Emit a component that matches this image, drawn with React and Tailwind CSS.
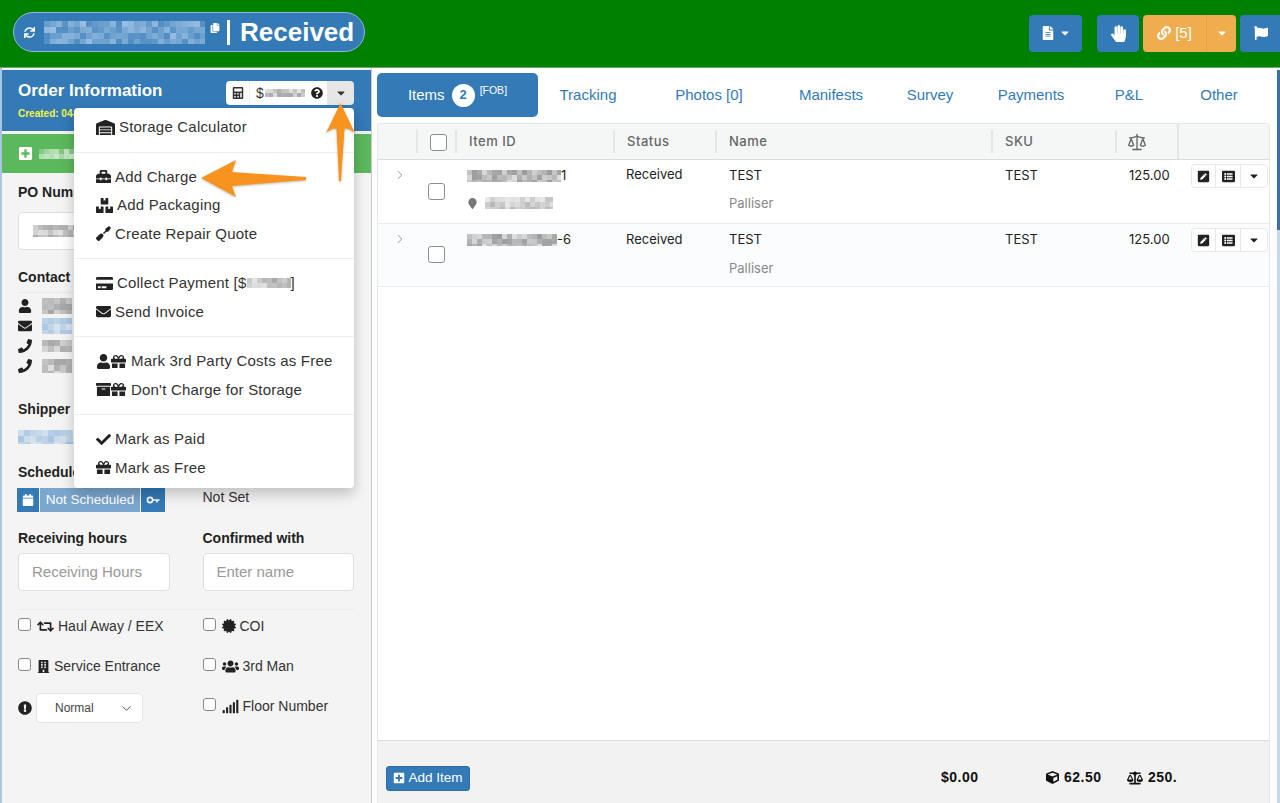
import React from "react";
import {
  FaSync, FaCopy, FaFileAlt, FaHandPaper, FaLink, FaCaretDown, FaCalculator, FaQuestionCircle,
  FaWarehouse, FaToolbox, FaBoxes, FaScrewdriver, FaCreditCard, FaEnvelope, FaUser, FaGift,
  FaArchive, FaCheck, FaPhoneAlt, FaPlusSquare, FaCalendar, FaRetweet, FaCertificate,
  FaBuilding, FaUsers, FaSignal, FaExclamationCircle, FaMapMarker, FaPenSquare, FaListAlt, FaCube,
  FaBalanceScale, FaFlag,
} from "react-icons/fa";
import { ChevronRight, ChevronDown, Scale } from "lucide-react";

const sans = "font-['Liberation_Sans',Arial,sans-serif]";

// pixelated block standing in for the censored bits of the screenshot
const Mosaic = ({ w, h, color = "#777", seed = 3, cell = 6 }) => {
  const cols = Math.ceil(w / cell);
  const rows = Math.ceil(h / cell);
  const cells = [];
  for (let i = 0; i < cols * rows; i++) {
    const v = Math.abs(Math.sin((i + 1) * 12.9898 * seed) * 43758.5453) % 1;
    cells.push(0.25 + v * 0.6);
  }
  return (
    <span
      className="inline-grid overflow-hidden blur-[0.7px] shrink-0"
      style={{ width: w, height: h, gridTemplateColumns: `repeat(${cols}, ${cell}px)`, gridAutoRows: `${cell}px` }}
    >
      {cells.map((o, i) => (
        <span key={i} style={{ background: color, opacity: o }} />
      ))}
    </span>
  );
};

const MenuItem = ({ icon, children }) => (
  <div className="h-[28.5px] pl-[22px] flex items-center gap-[4px] text-[15px] text-[#333] tracking-[0.2px] whitespace-nowrap">
    <span className="flex items-center text-[#222]">{icon}</span>
    {children}
  </div>
);

const MenuDivider = () => <div className="my-[10px] h-px bg-[#eeeeee]" />;

const Dropdown = () => (
  <div className="absolute left-[72px] top-[40px] w-[280px] bg-white rounded-[4px] pt-[5px] pb-[6px] shadow-[0_6px_14px_rgba(0,0,0,0.22)] z-10">
    <MenuItem icon={<FaWarehouse className="text-[19px]" />}>Storage Calculator</MenuItem>
    <MenuDivider />
    <MenuItem icon={<FaToolbox className="text-[15px]" />}>Add Charge</MenuItem>
    <MenuItem icon={<FaBoxes className="text-[17px]" />}>Add Packaging</MenuItem>
    <MenuItem icon={<FaScrewdriver className="text-[15px]" />}>Create Repair Quote</MenuItem>
    <MenuDivider />
    <MenuItem icon={<FaCreditCard className="text-[17px]" />}>
      <span className="flex items-center">Collect Payment [$<Mosaic w={44} h={10} color="#999" seed={5} cell={5} />]</span>
    </MenuItem>
    <MenuItem icon={<FaEnvelope className="text-[15px]" />}>Send Invoice</MenuItem>
    <MenuDivider />
    <MenuItem icon={<span className="flex mr-px"><FaUser className="text-[15px]" /><FaGift className="text-[15px]" /></span>}>
      Mark 3rd Party Costs as Free
    </MenuItem>
    <MenuItem icon={<span className="flex mr-px"><FaArchive className="text-[15px]" /><FaGift className="text-[15px]" /></span>}>
      Don't Charge for Storage
    </MenuItem>
    <MenuDivider />
    <MenuItem icon={<FaCheck className="text-[15px]" />}>Mark as Paid</MenuItem>
    <MenuItem icon={<FaGift className="text-[15px]" />}>Mark as Free</MenuItem>
  </div>
);

const Label = ({ children, className = "" }) => (
  <div className={`text-[14px] font-bold text-[#222] leading-5 ${className}`}>{children}</div>
);

const TextBox = ({ placeholder }) => (
  <div className="h-[38px] bg-white border border-[#ddd] rounded-[4px] px-[13px] flex items-center text-[15px] text-[#999]">
    {placeholder}
  </div>
);

const Check = ({ icon, label }) => (
  <div className="h-[40px] flex items-start gap-[5px] text-[14px] text-[#333] whitespace-nowrap">
    <span className="w-[13px] h-[13px] mt-[1px] bg-white border border-[#888] rounded-[3px] shrink-0" />
    <span className="flex items-center gap-[4px] leading-[18px] ml-px">
      {icon}
      {label}
    </span>
  </div>
);

const ContactRow = ({ icon, children }) => (
  <div className="h-[20px] flex items-center text-[#222]">
    <span className="w-[24px] text-[14px] flex">{icon}</span>
    {children}
  </div>
);

const Phone = () => <FaPhoneAlt className="-scale-x-100" />;

const KeyIcon = () => (
  <svg width="14" height="8" viewBox="0 0 14 8" fill="none" stroke="currentColor" strokeWidth="1.6">
    <circle cx="4" cy="4" r="2.6" />
    <path d="M6.6 4H13.5M11 4V6.5" />
  </svg>
);

const OrderPanel = () => (
  <aside className={`relative w-[372px] shrink-0 bg-[#f4f4f4] border-l-2 border-l-[#a9c6e3] border-r border-r-[#c9c9c9] pt-[2px] ${sans}`}>
    <div className="h-[61px] bg-[#337ab7] pl-[16px] pr-[17px] pt-[10px] flex justify-between">
      <div>
        <div className="text-[17px] font-bold text-white leading-[22px]">Order Information</div>
        <div className="text-[10px] font-bold text-[#f5f542] mt-[4px] whitespace-nowrap">Created: 04-</div>
      </div>
      <div className="flex h-[24px] mt-px text-[14px] text-[#333] rounded-[4px] overflow-hidden">
        <span className="w-[24px] bg-white flex items-center justify-center border-r border-[#eee]"><FaCalculator className="text-[12px]" /></span>
        <span className="w-[77px] bg-white flex items-center pl-[6px] gap-px">
          $<Mosaic w={40} h={8} color="#999" seed={7} cell={4} />
          <FaQuestionCircle className="text-[12px] text-[#222] ml-[5px]" />
        </span>
        <span className="w-[27px] bg-[#e6e6e6] flex items-center justify-center"><FaCaretDown className="text-[12px]" /></span>
      </div>
    </div>
    <div className="mt-[3px] h-[39px] bg-[#5cb85c] pl-[16px] flex items-center gap-[6px]">
      <FaPlusSquare className="text-[15px] text-white" />
      <Mosaic w={40} h={10} color="#e5f3e5" seed={2} cell={5} />
    </div>

    <div className="pl-[16px] pr-[17px]">
      <Label className="mt-[9px]">PO Number</Label>
      <div className="mt-[10px] h-[38px] bg-white border border-[#ddd] rounded-[4px] px-[14px] flex items-center">
        <Mosaic w={50} h={12} color="#999" seed={4} cell={5} />
      </div>
      <Label className="mt-[17px] pb-[5px] border-b border-[#e8e8e8]">Contact</Label>
      <div className="mt-[3px]">
        <ContactRow icon={<FaUser />}><Mosaic w={30} h={16} color="#999" seed={3} /></ContactRow>
        <ContactRow icon={<FaEnvelope />}><Mosaic w={30} h={16} color="#9cc0e0" seed={6} /></ContactRow>
        <ContactRow icon={<Phone />}><Mosaic w={30} h={12} color="#999" seed={8} /></ContactRow>
        <ContactRow icon={<Phone />}><Mosaic w={30} h={14} color="#999" seed={9} /></ContactRow>
      </div>
      <Label className="mt-[23px]">Shipper</Label>
      <div className="h-[16px]"><Mosaic w={55} h={14} color="#8db5dc" seed={11} /></div>
      <Label className="mt-[27px]">Schedule</Label>
      <div className="grid grid-cols-2 gap-x-[33px] mt-[6px] h-[24px] items-center">
        <div className="flex h-[24px] -ml-px text-[13.5px] text-white">
          <span className="w-[22px] bg-[#337ab7] flex items-center justify-center"><FaCalendar className="text-[12px]" /></span>
          <span className="w-[100px] ml-px bg-[#7ba6cd] flex items-center justify-center">Not Scheduled</span>
          <span className="w-[24px] ml-px bg-[#337ab7] flex items-center justify-center"><KeyIcon /></span>
        </div>
        <div className="text-[14px] text-[#333] -mt-[5px]">Not Set</div>
      </div>

      <div className="grid grid-cols-2 gap-x-[33px] mt-[16px]">
        <div>
          <Label>Receiving hours</Label>
          <div className="mt-[5px]"><TextBox placeholder="Receiving Hours" /></div>
        </div>
        <div>
          <Label>Confirmed with</Label>
          <div className="mt-[5px]"><TextBox placeholder="Enter name" /></div>
        </div>
      </div>
      <div className="mt-[18px] mb-[7px] h-px bg-[#ebebeb]" />
      <div className="grid grid-cols-2 gap-x-[33px]">
        <div>
          <Check icon={<FaRetweet className="text-[17px] text-[#222]" />} label="Haul Away / EEX" />
          <Check icon={<FaBuilding className="text-[13px] text-[#222]" />} label="Service Entrance" />
          <div className="flex items-center gap-[4px] -mt-[4px]">
            <FaExclamationCircle className="text-[14px] text-[#222]" />
            <div className="w-[107px] h-[30px] bg-white border border-[#e5e5e5] rounded-[4px] pl-[18px] pr-[8px] flex items-center justify-between text-[12px] text-[#444]">
              Normal
              <ChevronDown size={15} strokeWidth={1.4} />
            </div>
          </div>
        </div>
        <div>
          <Check icon={<FaCertificate className="text-[14px] text-[#222]" />} label="COI" />
          <Check icon={<FaUsers className="text-[17px] text-[#222]" />} label="3rd Man" />
          <Check icon={<FaSignal className="text-[17px] text-[#222]" />} label="Floor Number" />
        </div>
      </div>
    </div>

    <Dropdown />
  </aside>
);

const Tab = ({ w, children }) => (
  <div className={`${w} h-[44px] flex items-center justify-center text-[15px] text-[#337ab7]`}>{children}</div>
);

const HeadCell = ({ children, className = "" }) => (
  <div className={`h-[23px] border-l-2 border-[#e3e6e6] pl-[12px] pt-px flex items-center ${className}`}>{children}</div>
);

const ActionGroup = () => (
  <div className="absolute left-[813px] top-[4px] w-[77px] h-[24px] flex bg-white border border-[#e8e8e8] rounded-[4px] text-[#222]">
    <span className="w-[24px] border-r border-[#e8e8e8] flex items-center justify-center"><FaPenSquare className="text-[13px]" /></span>
    <span className="w-[25px] border-r border-[#e8e8e8] flex items-center justify-center"><FaListAlt className="text-[13px]" /></span>
    <span className="flex-1 flex items-center justify-center"><FaCaretDown className="text-[12px]" /></span>
  </div>
);

const ItemRow = ({ id, location, seed, shade }) => (
  <div className={`relative grid grid-cols-[38px_39px_158px_102px_276px_124px_62px_1fr] border-b border-[#e9ecef] text-[13px] text-[#222] font-['Inter',sans-serif] ${shade ? "h-[63px] bg-[#fbfcfe]" : "h-[64px] bg-white"}`}>
    <div className="pl-[15px] pt-[8px] text-[#777]"><ChevronRight size={14} strokeWidth={1.3} /></div>
    <div className={`pl-[12px] ${shade ? "pt-[22px]" : "pt-[23px]"}`}><span className="block w-[17px] h-[17px] bg-white border border-[#8a9090] rounded-[3px]" /></div>
    <div className="pl-[12px] pt-[7px]">
      <div className="flex items-center h-[18px]">
        <Mosaic w={id === "1" ? 94 : 90} h={12} color="#8a8a8a" seed={seed} cell={5} />
        <span>{id === "1" ? "1" : "-6"}</span>
      </div>
      {location && (
        <div className="flex items-center gap-[7px] mt-[12px] text-[#777]">
          <FaMapMarker className="text-[11px]" />
          <Mosaic w={68} h={12} color="#aaa" seed={13} cell={5} />
        </div>
      )}
    </div>
    <div className={`pl-[13px] ${shade ? "pt-[6px]" : "pt-[5px]"}`}>Received</div>
    <div className="pl-[14px] pt-[6px]">
      <div>TEST</div>
      <div className={`text-[#888] ${shade ? "mt-[9px]" : "mt-[8px]"}`}>Palliser</div>
    </div>
    <div className="pl-[14px] pt-[6px]">TEST</div>
    <div className="pl-[14px] pt-[6px] whitespace-nowrap">125.00</div>
    <div />
    <ActionGroup />
  </div>
);

const ItemsPanel = () => (
  <main className={`relative flex-1 bg-white pl-[5px] pr-[10px] pt-[5px] flex flex-col ${sans}`}>
    <div className="flex h-[44px]">
      <div className="w-[161px] bg-[#337ab7] rounded-[5px] flex items-center justify-center text-[15px] text-white">
        <span>Items</span>
        <span className="ml-[7px] w-[23px] h-[23px] rounded-full bg-white text-[#337ab7] text-[13px] font-bold flex items-center justify-center">2</span>
        <span className="ml-[5px] text-[10.5px] -mt-[8px]">[FOB]</span>
      </div>
      <Tab w="w-[100px]">Tracking</Tab>
      <Tab w="w-[142px]">Photos [0]</Tab>
      <Tab w="w-[102px]">Manifests</Tab>
      <Tab w="w-[96px]">Survey</Tab>
      <Tab w="w-[106px]">Payments</Tab>
      <Tab w="w-[90px]">P&amp;L</Tab>
      <Tab w="w-[90px]">Other</Tab>
    </div>
    <div className="mt-[6px] flex-1 flex flex-col border border-[#e6e8e8] border-b-0 rounded-t-[3px]">
      <div className="h-[36px] shrink-0 grid grid-cols-[38px_39px_158px_102px_276px_124px_62px_1fr] items-center bg-[#f5f7f7] border-b border-[#d9dcdc] text-[13px] font-medium tracking-[0.5px] text-[#666] font-['Inter',sans-serif]">
        <div />
        <HeadCell className="pl-[12px]"><span className="w-[17px] h-[17px] bg-white border border-[#8a9090] rounded-[3px]" /></HeadCell>
        <HeadCell>Item ID</HeadCell>
        <HeadCell>Status</HeadCell>
        <HeadCell>Name</HeadCell>
        <HeadCell>SKU</HeadCell>
        <HeadCell><Scale size={20} strokeWidth={1.6} className="-ml-[2px]" /></HeadCell>
        <div className="h-full border-l-2 border-[#e3e6e6]" />
      </div>
      <ItemRow id="1" seed={15} location />
      <ItemRow id="6" seed={17} shade />
      <div className="flex-1" />
      <div className="h-[63px] shrink-0 bg-[#f2f2f2] border-t border-[#dcdcdc] relative flex items-center pl-[8px] pt-[12px]">
        <div className="h-[25px] w-[84px] bg-[#337ab7] border border-[#2e6da4] rounded-[3px] text-white text-[13.5px] flex items-center justify-center gap-[3px]">
          <FaPlusSquare className="text-[12px]" />Add Item
        </div>
        <div className="ml-[471px] w-[105px] text-[14px] tracking-[0.5px] font-bold text-[#111] -mt-[1px]">$0.00</div>
        <div className="w-[81px] flex items-center gap-[5px] text-[14px] tracking-[0.5px] font-bold text-[#111] -mt-[1px]"><FaCube className="text-[13px]" />62.50</div>
        <div className="flex items-center gap-[5px] text-[14px] tracking-[0.5px] font-bold text-[#111] -mt-[1px]"><FaBalanceScale className="text-[16px]" />250.</div>
      </div>
    </div>
    <div className="absolute right-0 top-[2px] w-[3px] h-[160px] bg-[#3b6fa5]" />
    <div className="absolute right-0 top-[162px] w-[3px] bottom-0 bg-[#c6d9ec]" />
  </main>
);

const TopBar = () => (
  <header className={`h-[68px] shrink-0 bg-[#008000] border-b border-[#6fa86f] pl-[13px] flex items-center justify-between ${sans}`}>
    <div className="-mt-[3px] w-[352px] h-[40px] bg-[#337ab7] border border-[#8fb8dc] rounded-[20px] pl-[10px] flex items-center text-white">
      <FaSync className="text-[11px] mr-[9px]" />
      <Mosaic w={161} h={23} color="#a8c8e8" seed={19} />
      <FaCopy className="text-[10px] ml-[5px] -mt-[8px]" />
      <span className="ml-[7px] w-[3px] h-[25px] bg-white" />
      <span className="ml-[10px] text-[26px] font-bold leading-none">Received</span>
    </div>
    <div className="flex items-center -mt-[1px] h-[37px] text-white">
      <div className="w-[53px] h-full bg-[#337ab7] rounded-[4px] flex items-center justify-center gap-[4px]">
        <FaFileAlt className="text-[14px]" /><FaCaretDown className="text-[12px]" />
      </div>
      <div className="ml-[15px] w-[42px] h-full bg-[#337ab7] rounded-[4px] flex items-center justify-center">
        <FaHandPaper className="text-[17px]" />
      </div>
      <div className="ml-[4px] w-[93px] h-full bg-[#f0ad4e] rounded-[4px] flex">
        <span className="w-[64px] border-r border-[#e8a13c] flex items-center justify-center gap-[4px] text-[15px]"><FaLink className="text-[14px]" />[5]</span>
        <span className="flex-1 flex items-center justify-center"><FaCaretDown className="text-[12px]" /></span>
      </div>
      <div className="ml-[4px] w-[40px] h-full bg-[#337ab7] rounded-l-[4px] flex items-center pl-[14px]">
        <FaFlag className="text-[14px]" />
      </div>
    </div>
  </header>
);

const App = () => (
  <div className="relative w-[1280px] h-[803px] overflow-hidden flex flex-col bg-white">
    <TopBar />
    <div className="flex-1 flex min-h-0">
      <OrderPanel />
      <ItemsPanel />
    </div>
    {/* orange annotation arrows on top of the screenshot */}
    <svg className="absolute left-0 top-0 z-20 drop-shadow-[0_1px_1px_rgba(0,0,0,0.25)]" width="1280" height="803" viewBox="0 0 1280 803" fill="#f7931e">
      <path d="M340.5 103 L355 133 Q347 127 344.5 129 L341 181 L339 181 L336.5 129 Q333 127 326 133 Z" />
      <path d="M201 178 L236 160 L232 172 L306 177 L306 180 L232 186 L236 197 Z" />
    </svg>
  </div>
);

export default App;
